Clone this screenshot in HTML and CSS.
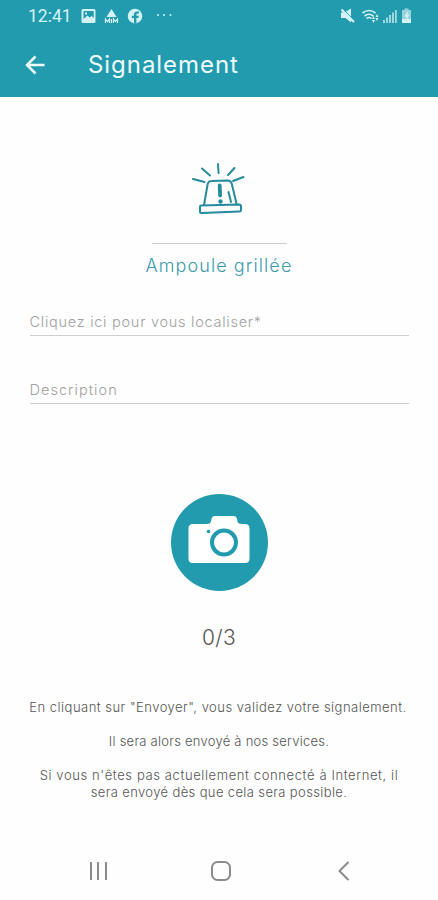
FILE: index.html
```html
<!DOCTYPE html>
<html lang="fr">
<head>
<meta charset="utf-8">
<meta name="viewport" content="width=device-width, initial-scale=1">
<title>Signalement</title>
<link rel="stylesheet" href="styles.css">
</head>
<body>
<header class="header">
  <div class="status">
    <span class="clock">12:41</span>
    <svg class="status-left" width="96" height="20" viewBox="0 0 96 20" fill="currentColor">
      <path fill-rule="evenodd" d="M2 3h11q1.500 0 1.500 1.500v11q0 1.500-1.500 1.500h-11q-1.500 0-1.500-1.500v-11q0-1.500 1.500-1.500zM2.500 5v8l4-3.500 2.200 2 2-1.500 2 2v-7zM4 6.500h2v2h-2z"/>
      <path d="M30.500 3l5 8h-10z"/>
      <path d="M24.500 17v-4l2 2.500 2-2.500v4M30.500 13v4M32.500 17v-4l2 2.500 2-2.500v4" fill="none" stroke="currentColor" stroke-width="1.200"/>
      <path fill-rule="evenodd" d="M54 2.800a7.300 7.300 0 1 0 0 14.600a7.300 7.300 0 1 0 0-14.600zM53 17.500v-5.500h-2.200v-2.200h2.200v-1.300q0-3 3-3h2v2h-1.400q-1.200 0-1.200 1.200v1.100h2.400l-.4 2.200h-2v5.500z"/>
      <circle cx="77" cy="9" r="1"/><circle cx="83" cy="9" r="1"/><circle cx="89.500" cy="9" r="1"/>
    </svg>
    <svg class="status-right" width="74" height="20" viewBox="0 0 74 20" fill="currentColor">
      <path d="M1 6.500h3.500l6.500-4v14l-5.500-4.500h-4.500z"/>
      <path d="M3 3l12 12" stroke="#239baf" stroke-width="1"/>
      <path d="M1.500 3.500l12.500 12.500" stroke="currentColor" stroke-width="2.200"/>
      <path d="M22.500 7q6.500-5 13 0M24.500 10q4.500-3.500 9 0M26.500 12.500q2.500-2 5 0" fill="none" stroke="currentColor" stroke-width="1.600"/>
      <path d="M32 13h3l-1.500-3zM32 14h3l-1.500 3zM37 8l1.500 3h-3zM37 15l1.500-3h-3z"/>
      <path d="M43 14h2v3h-2zM46 11.500h2v5.500h-2z" opacity=".7"/>
      <path d="M49 9h2v8h-2zM52 6.500h2v10.500h-2zM55 4h1.800v13h-1.800z" opacity=".7"/>
      <path d="M64.500 2.500h4v1.500h2.500v13h-9v-13h2.500z" opacity=".65"/>
      <path d="M62 13h9v4h-9zM67.500 5l-3 5.500h2v3.500l3-5.500h-2z"/>
    </svg>
  </div>
  <div class="toolbar">
    <svg width="20" height="20" viewBox="0 0 20 20" fill="none" stroke="currentColor" stroke-width="2.500"><path d="M19.500 10h-17M10.500 1.500l-8.500 8.500 8.500 8.500"/></svg>
    <h1 class="title">Signalement</h1>
  </div>
</header>
<main class="main">
  <svg class="alarm" width="56" height="54" viewBox="0 0 56 54" fill="none" stroke="#238b9b" stroke-width="2" stroke-linecap="round" stroke-linejoin="round">
    <path d="M27 3l.6 9M11 7.500l8 7M43.500 7l-6.500 7M2 18l11.500 3M52.500 16l-10.500 4"/>
    <path d="M13 44l3.500-20q.5-4 4-4l16-.5q3.500 0 4.300 3.500l4.700 19.500M10 44.500l38-1q2 0 2 2v3.500q0 1.500-2 1.500l-37.500 1.500q-1.500 0-1.500-1.500v-4q0-2 1-2z"/>
    <path d="M37.500 31l2.500 10"/>
    <path d="M28.700 24.500l.4 10" stroke-width="3.800"/>
    <circle cx="29.500" cy="40.500" r="1.200" fill="#238b9b"/>
  </svg>
  <div class="divider"></div>
  <h2 class="subject">Ampoule grillée</h2>
  <div class="field"><span class="locate">Cliquez ici pour vous localiser*</span></div>
  <div class="field field-last"><span class="describe">Description</span></div>
  <div class="photo">
    <svg width="64" height="50" viewBox="0 0 64 50">
      <path fill="#fff" d="M6 10h13.500q4 0 4.500-2.500l.5-2.500q.5-3 3.500-3h18.500q3 0 3.500 3l.5 2.500q.5 2.500 4.500 2.500h3q4.500 0 4.500 4.500v30q0 4.500-4.500 4.500h-52q-4.500 0-4.500-4.500v-30q0-4.500 4.500-4.500z"/>
      <circle cx="37" cy="28.500" r="12" fill="#fff" stroke="#239baf" stroke-width="4"/>
      <circle cx="21.500" cy="17.500" r="1.800" fill="#239baf"/>
    </svg>
  </div>
  <div class="count">0/3</div>
  <div class="notice">
    <p class="line-a">En cliquant sur "Envoyer", vous validez votre signalement.</p>
    <p class="line-b">Il sera alors envoyé à nos services.</p>
    <p><span class="line-c">Si vous n'êtes pas actuellement connecté à Internet, il</span><br><span class="line-d">sera envoyé dès que cela sera possible.</span></p>
  </div>
</main>
<nav class="nav">
  <svg width="20" height="20" viewBox="0 0 20 20" stroke="currentColor" stroke-width="2"><path d="M3 1v18M10 1v18M18 1v18"/></svg>
  <svg width="22" height="22" viewBox="0 0 22 22" fill="none" stroke="currentColor" stroke-width="2"><rect x="2" y="2" width="18" height="18" rx="5.500"/></svg>
  <svg width="20" height="20" viewBox="0 0 20 20" fill="none" stroke="currentColor" stroke-width="2"><path d="M14.500 1l-9 9 9 9"/></svg>
</nav>
</body>
</html>
```
FILE: styles.css
```css
* { box-sizing: border-box; }
body {
  margin: 0;
  height: 900px;
  background: #fefefe;
  color: #555;
  font-family: Inter, "Open Sans", sans-serif;
  overflow: hidden;
}
h1, h2, p { margin: 0; }
svg { display: block; flex: none; }
.header { height: 97px; background: #239baf; color: #eefbfc; }
.status {
  height: 32px;
  padding: 0 24px 0 28px;
  display: flex;
  align-items: center;
  color: #d5f2f5;
}
.clock { width: 53px; font: 17.500px/32px Roboto, sans-serif; }
.status-right { margin-left: auto; }
.toolbar {
  height: 65px;
  padding-left: 25px;
  display: flex;
  align-items: center;
  gap: 43px;
}
.title { font-size: 24px; font-weight: 400; letter-spacing: .95px; line-height: 32px; }
.main { height: 745px; display: flex; flex-direction: column; align-items: center; }
.alarm { margin-top: 64px; }
.divider { width: 135px; height: 1px; margin-top: 28px; background: #cfcfcf; }
.subject {
  margin-top: 9px;
  color: #3b9baa;
  font-size: 18px;
  font-weight: 300;
  line-height: 26px;
  letter-spacing: 1.080px;
}
.field {
  width: 379px;
  height: 27px;
  margin-top: 30px;
  border-bottom: 1px solid #cecece;
  color: #a0a0a0;
  font-size: 14.500px;
  font-weight: 300;
  line-height: 25px;
  white-space: nowrap;
}
.field-last { margin-top: 41px; }
.locate { letter-spacing: .740px; }
.describe { letter-spacing: 1.050px; }
.photo {
  width: 97px;
  height: 97px;
  margin-top: 90px;
  border-radius: 50%;
  background: #239baf;
  display: flex;
  align-items: center;
  justify-content: center;
}
.photo svg { margin-top: -7px; }
.count { margin-top: 31px; font-size: 21px; font-weight: 300; line-height: 32px; letter-spacing: .3px; }
.notice {
  margin-top: 45px;
  font-size: 13px;
  font-weight: 300;
  line-height: 17px;
  text-align: center;
  white-space: nowrap;
}
.notice p + p { margin-top: 17px; }
.line-a { letter-spacing: .480px; margin-left: -2px; }
.line-b { letter-spacing: .250px; }
.line-c { letter-spacing: .610px; }
.line-d { letter-spacing: .370px; }
.nav {
  height: 58px;
  padding: 0 84px 0 88px;
  display: flex;
  align-items: center;
  justify-content: space-between;
  color: #8b8b8b;
}
```
